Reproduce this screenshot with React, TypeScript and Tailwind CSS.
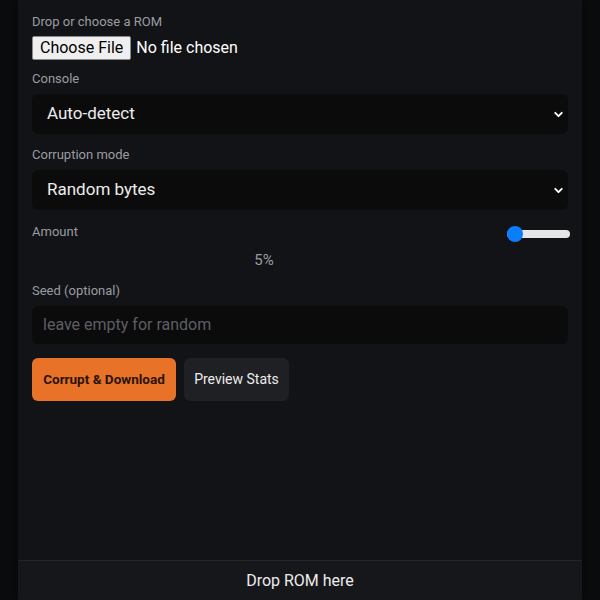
import { ChevronDown } from 'lucide-react'

const Field = ({ label, children }: { label: string; children: React.ReactNode }) => (
    <div className="flex flex-col gap-[7px]">
        <span className="text-[13px] leading-4 text-[#9a9ca1]">{label}</span>
        {children}
    </div>
)

const Select = ({ value }: { value: string }) => (
    <div className="flex items-center justify-between h-10 rounded-md bg-[#0b0b0c] pl-[15px] pr-[3px]">
        <span className="text-[17px] text-[#ececec]">{value}</span>
        <ChevronDown className="w-[13px] h-[13px] text-white" strokeWidth={3.5} />
    </div>
)

export default function App() {
    return (
        <div className="w-[600px] h-[600px] bg-[#0b0c0d] flex justify-center overflow-hidden" style={{ fontFamily: 'Roboto, "Noto Sans", sans-serif' }}>
            <div className="w-[564px] h-full bg-[#121316] flex flex-col shadow-[0_0_12px_rgba(0,0,0,0.6)]">
                <div className="flex-1 px-[14px] pt-[14px] flex flex-col">
                    <Field label="Drop or choose a ROM">
                        <div className="flex items-center gap-[5px] -mt-[1px]">
                            <span className="h-6 px-[7px] flex items-center bg-[#efefef] border border-[#8a8a8a] rounded-[2px] text-[16px] text-black">Choose File</span>
                            <span className="text-[16px] text-white">No file chosen</span>
                        </div>
                    </Field>
                    <div className="h-[11px]" />
                    <Field label="Console">
                        <Select value="Auto-detect" />
                    </Field>
                    <div className="h-[13px]" />
                    <Field label="Corruption mode">
                        <Select value="Random bytes" />
                    </Field>
                    <div className="h-[14px]" />
                    <div className="flex justify-between items-start">
                        <span className="text-[13px] leading-4 text-[#9a9ca1]">Amount</span>
                        <div className="relative w-[63px] h-[8px] mt-[6px] mr-[-2px] rounded-full bg-[#e6e6e6]">
                            <span className="absolute left-0 -top-[4px] w-4 h-4 rounded-full bg-[#0b7dff]" />
                        </div>
                    </div>
                    <div className="w-[464px] text-center text-[15px] leading-5 text-[#9a9ca1] mt-[10px]">5%</div>
                    <div className="h-[13px]" />
                    <Field label="Seed (optional)">
                        <div className="h-[38px] rounded-md bg-[#0b0b0c] flex items-center px-[11px] text-[16px] text-[#5d5f63]">leave empty for random</div>
                    </Field>
                    <div className="flex gap-2 mt-[14px]">
                        <button className="w-[144px] h-[43px] rounded-md bg-[#e87228] text-[13.5px] font-bold text-[#2a1405]">Corrupt &amp; Download</button>
                        <button className="w-[105px] h-[43px] rounded-md bg-[#1f2023] text-[14px] text-[#ececec]">Preview Stats</button>
                    </div>
                </div>
                <div className="h-10 border-t border-[#222428] bg-[#16171a] flex items-center justify-center text-[16px] text-[#ececec]">
                    Drop ROM here
                </div>
            </div>
        </div>
    )
}
